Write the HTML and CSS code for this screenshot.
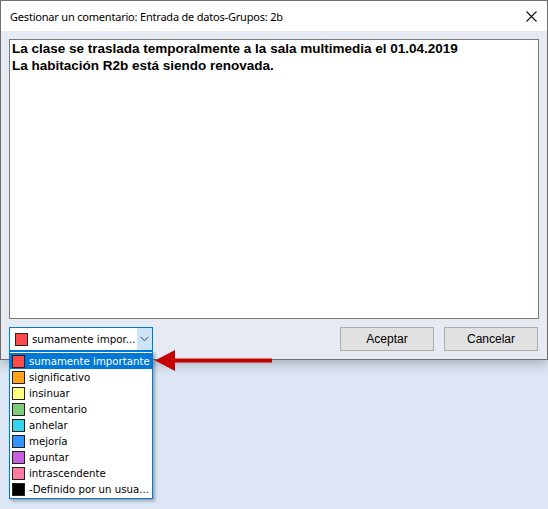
FILE: index.html
```html
<!DOCTYPE html>
<html lang="es">
<head>
<meta charset="utf-8">
<title>Gestionar un comentario</title>
<link rel="stylesheet" href="styles.css">
</head>
<body>
<div class="window">
  <div class="titlebar">
    <span class="title">Gestionar un comentario: Entrada de datos-Grupos: 2b</span>
    <svg class="close" width="11" height="11" viewBox="0 0 11 11"><path d="M0.5 0.5 L10.5 10.5 M10.5 0.5 L0.5 10.5" stroke="#111" stroke-width="1.1" fill="none"/></svg>
  </div>
  <div class="body">
    <div class="memo">La clase se traslada temporalmente a la sala multimedia el 01.04.2019<br>La habitación R2b está siendo renovada.</div>
    <div class="footer">
      <div class="combo">
        <span class="swatch c-red"></span>
        <span class="combo-text">sumamente impor...</span>
        <span class="combo-btn"><svg width="9" height="6" viewBox="0 0 9 6"><path d="M0.5 0.8 L4.5 4.8 L8.5 0.8" stroke="#444" stroke-width="1" fill="none"/></svg></span>
      </div>
      <div class="buttons">
        <button class="btn">Aceptar</button>
        <button class="btn">Cancelar</button>
      </div>
    </div>
  </div>
</div>
<ul class="list">
  <li class="item selected"><span class="swatch c-red"></span>sumamente importante</li>
  <li class="item"><span class="swatch c-orange"></span>significativo</li>
  <li class="item"><span class="swatch c-yellow"></span>insinuar</li>
  <li class="item"><span class="swatch c-green"></span>comentario</li>
  <li class="item"><span class="swatch c-cyan"></span>anhelar</li>
  <li class="item"><span class="swatch c-blue"></span>mejoría</li>
  <li class="item"><span class="swatch c-purple"></span>apuntar</li>
  <li class="item"><span class="swatch c-pink"></span>intrascendente</li>
  <li class="item"><span class="swatch c-black"></span>-Definido por un usua...</li>
</ul>
<svg class="arrow" width="118" height="21" viewBox="0 0 118 21">
  <polygon points="0,10.5 20,0 20,21" fill="#c40000"/>
  <rect x="19" y="8.5" width="98" height="4" fill="#c40000"/>
</svg>
</body>
</html>
```
FILE: styles.css
```css
* { box-sizing: border-box; }
html, body { margin: 0; padding: 0; }
body {
  width: 548px;
  height: 509px;
  background: #dce6f4;
  overflow: hidden;
  position: relative;
  font-family: "DejaVu Sans", sans-serif;
}
.window {
  width: 548px;
  height: 360px;
  border: 1px solid #6e6e6e;
  background: #e6ebf3;
  box-shadow: 0 3px 12px rgba(0,0,0,0.28);
  display: flex;
  flex-direction: column;
}
.titlebar {
  height: 30px;
  background: #fff;
  display: flex;
  align-items: center;
  justify-content: space-between;
  padding: 0 10px 0 9px;
}
.title {
  font-family: "Noto Sans", sans-serif;
  font-size: 11px;
  letter-spacing: -0.2px;
  color: #000;
}
.close { display: block; }
.body {
  flex: 1;
  padding: 8px 8px 8px 8px;
  display: flex;
  flex-direction: column;
  gap: 8px;
}
.memo {
  height: 280px;
  background: #fff;
  border: 1px solid #7a7a7a;
  padding: 0 2px;
  font-family: "Liberation Sans", sans-serif;
  font-weight: bold;
  font-size: 13.5px;
  line-height: 17px;
  color: #000;
}
.footer {
  display: flex;
  align-items: center;
  height: 24px;
}
.combo {
  width: 144px;
  height: 24px;
  border: 1px solid #0078d7;
  background: #fff;
  display: flex;
  align-items: center;
  padding-left: 5px;
  font-size: 10.3px;
}
.combo .swatch { margin-right: 4px; }
.combo-text { flex: 1; white-space: nowrap; overflow: hidden; }
.combo-btn {
  width: 15px;
  height: 22px;
  background: #cce4f7;
  display: flex;
  align-items: center;
  justify-content: center;
}
.combo-btn svg { display: block; }
.buttons {
  margin-left: auto;
  margin-right: 1px;
  display: flex;
  gap: 10px;
}
.btn {
  width: 94px;
  height: 24px;
  background: #e1e1e1;
  border: 1px solid #adadad;
  font-family: "Liberation Sans", sans-serif;
  font-size: 12px;
  color: #000;
  padding: 0;
}
.swatch {
  display: inline-block;
  width: 13px;
  height: 13px;
  border: 1px solid #222;
  flex: none;
}
.c-red { background: #ff4b4b; }
.c-orange { background: #ffa41c; }
.c-yellow { background: #ffff80; }
.c-green { background: #7ccc7c; }
.c-cyan { background: #33d6ea; }
.c-blue { background: #3393ff; }
.c-purple { background: #c85fe0; }
.c-pink { background: #ff7aa0; }
.c-black { background: #000; }
.list {
  position: absolute;
  left: 9px;
  top: 351px;
  width: 144px;
  margin: 0;
  padding: 1px 0;
  list-style: none;
  background: #fff;
  border: 1px solid #0078d7;
  box-shadow: 2px 2px 3px rgba(0,0,0,0.3);
  font-size: 10.2px;
}
.item {
  height: 16px;
  display: flex;
  align-items: center;
  gap: 4px;
  padding-left: 2px;
  color: #000;
  white-space: nowrap;
}
.item.selected { background: #0078d7; color: #fff; }
.arrow {
  position: absolute;
  left: 155px;
  top: 350px;
}
```
